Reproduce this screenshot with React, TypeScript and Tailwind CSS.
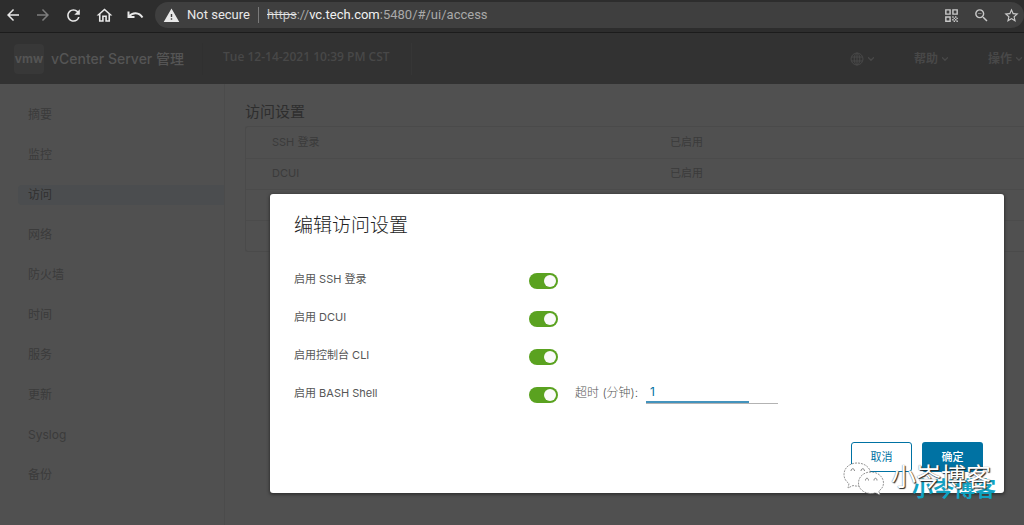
import { useState } from "react";
import { ChevronDown } from "lucide-react";
import {
    MdArrowBack,
    MdArrowForward,
    MdOutlineHome,
    MdQrCode,
    MdRefresh,
    MdStarOutline,
    MdWarning,
    MdZoomOut,
} from "react-icons/md";

const navItems = ["摘要", "监控", "访问", "网络", "防火墙", "时间", "服务", "更新", "Syslog", "备份"];

const accessRows = [
    { name: "SSH 登录", status: "已启用" },
    { name: "DCUI", status: "已启用" },
    { name: "", status: "" },
    { name: "", status: "" },
];

const settings = [
    { id: "ssh", label: "启用 SSH 登录" },
    { id: "dcui", label: "启用 DCUI" },
    { id: "cli", label: "启用控制台 CLI" },
    { id: "bash", label: "启用 BASH Shell" },
];

function UndoIcon() {
    return (
        <svg viewBox="0 0 18 18" className="size-[18px]" fill="none" stroke="currentColor" strokeWidth="2">
            <path d="M2.500 5.500v5.500h6" />
            <path d="M3 10.500C6.500 6 13 6 16.500 11.500" />
        </svg>
    );
}

function BrowserBar() {
    return (
        <div className="flex h-[33px] shrink-0 items-center border-b border-[#1c1c1c] bg-[#2d2d2d] pb-[2px] pl-1 font-['Roboto',sans-serif] text-[13px] text-[#e8e8e8]">
            <div className="flex w-[151px] shrink-0 items-center gap-3">
                <button aria-label="Back"><MdArrowBack size={18} /></button>
                <button aria-label="Forward" className="text-[#7d7d7d]"><MdArrowForward size={18} /></button>
                <button aria-label="Reload"><MdRefresh size={19} /></button>
                <button aria-label="Home"><MdOutlineHome size={19} /></button>
                <button aria-label="Undo"><UndoIcon /></button>
            </div>
            <div className="flex h-[26px] min-w-0 flex-1 items-center rounded-full bg-[#3f3f3f] pr-1 pl-2">
                <MdWarning size={17} className="shrink-0" />
                <span className="ml-[7px] w-[63px] whitespace-nowrap">Not secure</span>
                <span className="mx-2 h-4 w-px bg-[#7a7a7a]" />
                <span className="flex-1 truncate text-[#a9a9a9]">
                    <span className="text-[#c4c4c4] line-through decoration-[#e8e8e8]">https</span>
                    ://<span className="text-[#f1f1f1]">vc.tech.com</span>:5480/#/ui/access
                </span>
                <div className="flex items-center gap-[13px] text-[#c9c9c9]">
                    <button aria-label="QR code"><MdQrCode size={17} /></button>
                    <button aria-label="Zoom"><MdZoomOut size={17} /></button>
                    <button aria-label="Bookmark"><MdStarOutline size={17} /></button>
                </div>
            </div>
        </div>
    );
}

function GlobeIcon() {
    return (
        <svg viewBox="0 0 14 14" className="size-[14px]" fill="none" stroke="currentColor">
            <circle cx="7" cy="7" r="6" />
            <ellipse cx="7" cy="7" rx="2.8" ry="6" />
            <path d="M7 1v12M1.500 5h11M1.500 9h11" />
        </svg>
    );
}

function AppHeader() {
    return (
        <header className="flex h-[51px] shrink-0 items-center bg-[#323232] pl-[14px] text-xs text-[#484848]">
            <div className="flex size-[30px] items-center justify-center rounded-sm bg-[#383838] font-['Inter',sans-serif] font-bold text-[#545454]">
                vmw
            </div>
            <h1 className="ml-[7px] w-[151px] text-sm font-medium whitespace-nowrap text-[#555]">vCenter Server 管理</h1>
            <span className="h-8 w-px bg-[#303030]" />
            <span className="ml-5 w-[188px] pb-1 font-['Open_Sans',sans-serif] font-semibold whitespace-nowrap">
                Tue 12-14-2021 10:39 PM CST
            </span>
            <span className="h-8 w-px bg-[#363636]" />
            <div className="ml-auto flex items-center">
                <button aria-label="语言" className="flex items-center gap-[2px]">
                    <GlobeIcon />
                    <ChevronDown size={10} strokeWidth={3} />
                </button>
                <button className="ml-[38px] flex items-center gap-[2px] font-bold">
                    帮助
                    <ChevronDown size={10} strokeWidth={3} />
                </button>
                <button className="ml-[38px] flex items-center gap-[2px] font-bold">
                    操作
                    <ChevronDown size={10} strokeWidth={3} />
                </button>
            </div>
        </header>
    );
}

function Toggle({ id }: { id: string }) {
    return (
        <input
            id={id}
            type="checkbox"
            defaultChecked
            className="mt-1 h-4 w-[29px] shrink-0 appearance-none rounded-full bg-[#8c8c8c] before:mt-[2px] before:ml-[2px] before:block before:size-3 before:rounded-full before:bg-[#fafafa] checked:bg-[#5aa220] checked:before:ml-[15px]"
        />
    );
}

function Watermark() {
    return (
        <div className="pointer-events-none absolute -right-px -bottom-2 h-10 w-[170px] leading-none whitespace-nowrap">
            <span className="absolute right-[9px] bottom-[2px] text-[21px] font-bold text-[#10a2c2]">
                小岑博客
            </span>
            <svg viewBox="0 0 42 36" className="absolute top-0 left-2 h-9 w-[42px]" fill="#fff" stroke="#666" strokeWidth="0.7" strokeDasharray="2 1">
                <path d="M14 2C6.500 2 1 7 1 13.500c0 4 2 7 5 9L5 27l5-2.500c3 .8 5.500.8 8 0C27 22 28 17 27.500 12 27 6 21 2 14 2z" />
                <path d="M28 11c-7.500 0-12.500 5-12.500 11S21 32.500 28 32.500c1.500 0 3-.2 4.500-.7L37 34l-1.200-4C39 28 40.500 25 40.500 22 40.500 16 35 11 28 11z" />
                <g fill="#fff" stroke="#555" strokeDasharray="none">
                    <path d="M8 10c0-3 3.500-3 3.500 0M18 10c0-3 3.500-3 3.500 0M22.500 19.500c0-3 3-3 3 0M31 19.500c0-3 3-3 3 0" />
                </g>
            </svg>
            <span className="absolute top-1 left-14 text-[25px] font-normal text-white [text-shadow:1px_1px_1px_#222,0_0_1px_#555]">
                小岑博客
            </span>
        </div>
    );
}

function EditDialog() {
    const [timeout, setTimeout] = useState("1");

    return (
        <form
            role="dialog"
            aria-labelledby="dialog-title"
            onSubmit={(e) => e.preventDefault()}
            className="relative rounded-[3px] bg-white pt-5 pr-[21px] pb-[21px] pl-6 text-xs text-[#565656] shadow-[0_1px_3px_1px_#333]"
        >
            <h2 id="dialog-title" className="mb-[22px] text-[19px] leading-6 font-light text-[#222]">编辑访问设置</h2>
            {settings.map((item) => (
                <div key={item.id} className="flex h-[38px] items-center">
                    <label htmlFor={item.id} className="w-[235px] shrink-0 text-[11px]">{item.label}</label>
                    <Toggle id={item.id} />
                    {item.id === "bash" && (
                        <>
                            <label htmlFor="timeout" className="ml-[17px] w-[71px] font-light whitespace-nowrap">超时 (分钟):</label>
                            <div className="w-[132px] border-b border-[#b3b3b3]">
                                <input
                                    id="timeout"
                                    value={timeout}
                                    onChange={(e) => setTimeout(e.target.value)}
                                    className="block h-5 w-[103px] border-b-2 border-[#4393bd] px-1 text-[#0072a3] outline-none"
                                />
                            </div>
                        </>
                    )}
                </div>
            ))}
            <div className="mt-[30px] flex justify-end gap-[10px] text-[11px]">
                <button type="button" className="h-[30px] w-[61px] rounded-[3px] border border-[#0072a3] text-[#0072a3]">
                    取消
                </button>
                <button type="submit" className="h-[30px] w-[61px] rounded-[3px] bg-[#0072a3] font-medium text-white">
                    确定
                </button>
            </div>
            <Watermark />
        </form>
    );
}

export default function App() {
    return (
        <div className="flex min-h-screen flex-col overflow-hidden bg-[#505050] font-['Inter','Noto_Sans_CJK_SC',sans-serif]">
            <BrowserBar />
            <div className="relative flex flex-1 flex-col">
                <AppHeader />
                <div className="flex flex-1 text-xs text-[#3b3b3b]">
                    <nav className="flex w-[225px] shrink-0 flex-col gap-5 border-r border-[#4b4b4b] pt-[21px] pl-[18px]">
                        {navItems.map((item) => (
                            <a
                                key={item}
                                href="#"
                                className={`flex h-5 items-center rounded-l-sm pl-[10px] ${item === "访问" ? "bg-[#4b4d4f] text-[#303030]" : ""}`}
                            >
                                {item}
                            </a>
                        ))}
                    </nav>
                    <main className="min-w-0 flex-1 pt-[18px] pl-5">
                        <h2 className="mb-1 text-[15px] leading-5 text-[#2e2e2e]">访问设置</h2>
                        <div className="rounded-l-[3px] border border-r-0 border-[#4a4a4a]">
                            <table className="w-full table-fixed text-[11px]">
                                <tbody>
                                    {accessRows.map((row, i) => (
                                        <tr key={i} className="h-[31px] border-b border-[#4b4b4b] last:border-b-0">
                                            <td className="w-[398px] pl-[26px]">{row.name}</td>
                                            <td className="pl-[26px]">{row.status}</td>
                                        </tr>
                                    ))}
                                </tbody>
                            </table>
                        </div>
                    </main>
                </div>
                <div className="absolute inset-x-0 top-0 pt-[161px] pr-5 pl-[270px]">
                    <EditDialog />
                </div>
            </div>
        </div>
    );
}
